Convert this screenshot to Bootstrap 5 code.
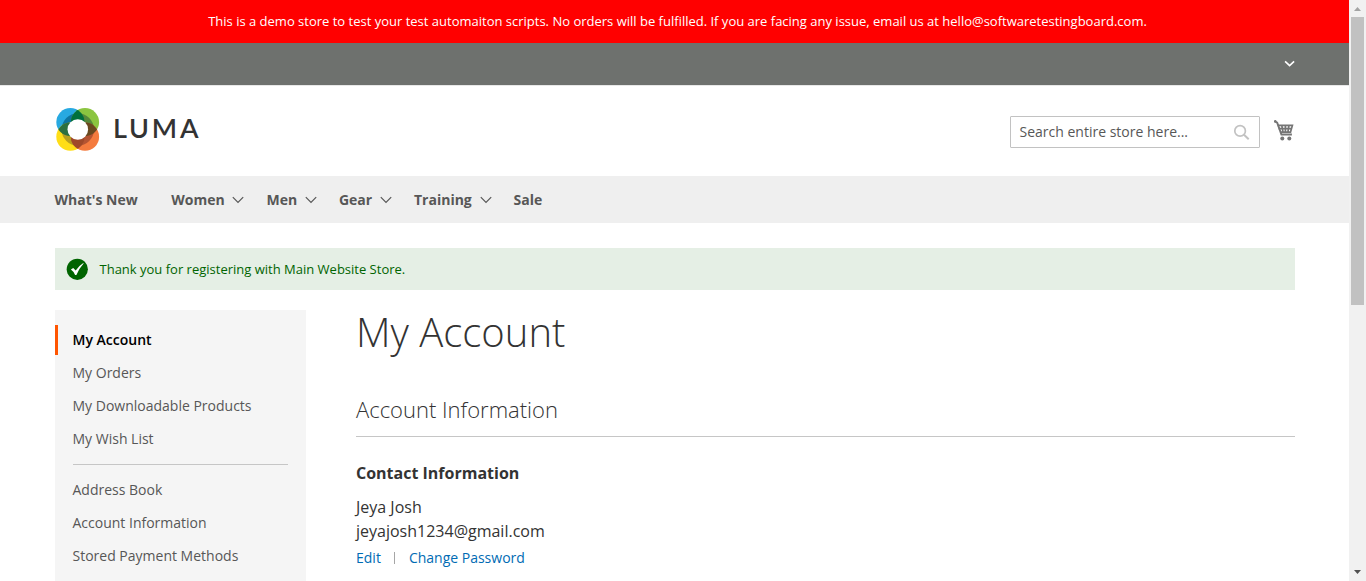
<!DOCTYPE html>
<html lang="en">
<head>
<meta charset="utf-8">
<meta name="viewport" content="width=device-width, initial-scale=1">
<title>My Account</title>
<link href="https://cdn.jsdelivr.net/npm/bootstrap@5.3.0/dist/css/bootstrap.min.css" rel="stylesheet">
<style>
  body { font-family: "Open Sans", sans-serif; font-size: 14px; line-height: 20px; color: #333; background: #fff; height: 100vh; overflow: hidden; }
  a { text-decoration: none; }
  svg { display: block; flex: none; }
  .page { min-width: 0; height: 100vh; overflow: hidden; }
  .wrap { width: 1240px; margin: 0 auto; }
  .demo { background: #f00; color: #fff; height: 43px; font-size: 13px; line-height: 43px; padding-left: 6px; }
  .panel-bar { background: #6e716e; height: 42px; padding-bottom: 1px; }
  .brand-row { height: 91px; border-top: 1px solid #e8e8e8; }
  .logo { margin-bottom: 1px; }
  .search { width: 250px; height: 32px; border: 1px solid #c2c2c2; border-radius: 1px; padding: 0 9px 0 9px; color: #575757; margin: 2px 14px 0 0; }
  .mainnav { background: #efefef; height: 47px; font-weight: 700; line-height: 47px; }
  .mainnav a { color: #575757; }
  .nav-first { margin-right: 33.5px; }
  .nav-drop { margin-right: 22px; }
  .nav-drop svg { margin: 1px 0 0 7.8px; }
  .notice { background: #e5efe5; color: #006400; height: 42px; margin-top: 25px; font-size: 13px; padding-left: 11px; gap: 12px; }
  .columns { margin-top: 20px; }
  .side { width: 251px; height: 300px; background: #f5f5f5; padding: 15px 0; }
  .side a { display: block; color: #575757; height: 30px; line-height: 30px; margin-bottom: 3px; padding-left: 15px; border-left: 3px solid transparent; }
  .side a.current { color: #000; font-weight: 600; border-color: #ff5501; }
  .side hr { margin: 10px 18px; border-color: #c6c6c6; opacity: 1; }
  .content { margin-left: 50.5px; }
  h1 { font-size: 40px; font-weight: 300; line-height: 44px; margin: 0 0 43px; }
  h2 { font-size: 22px; font-weight: 300; line-height: 24px; padding: 0 0 14px; margin: 0 0 24px; border-bottom: 1px solid #c6c6c6; height: 40px; }
  h3 { font-size: 16px; font-weight: 700; line-height: 24px; margin: 0 0 10px; }
  .details { font-size: 16px; line-height: 24px; margin: 0 0 5px; }
  .links a { color: #006bb4; }
  .divider { width: 1px; height: 12px; background: #a6a6a6; margin: 4px 14px 0 13px; }
  .scroller { width: 17px; background: #f1f1f1; height: 100vh; padding: 6px 2px 6px; }
  .thumb { width: 13px; height: 288px; background: #c1c1c1; margin-top: 6px; }
</style>
</head>
<body class="d-flex">
<div class="page flex-grow-1">
  <div class="demo text-center">This is a demo store to test your test automaiton scripts. No orders will be fulfilled. If you are facing any issue, email us at hello@softwaretestingboard.com.</div>
  <div class="panel-bar"><div class="wrap d-flex justify-content-end align-items-center h-100">
    <svg width="12" height="8" viewBox="0 0 12 8"><path d="M2.1 1.4 6.6 5.7 11.1 1.4" fill="none" stroke="#fff" stroke-width="1.6"/></svg>
  </div></div>
  <header class="brand-row"><div class="wrap d-flex align-items-center h-100">
    <svg class="logo" width="148" height="48" viewBox="0 0 148 48" role="img" aria-label="Luma">
      <defs>
        <clipPath id="core"><circle cx="22.8" cy="22.5" r="16.2"/></clipPath>
        <clipPath id="tl"><circle cx="15.4" cy="15.1" r="14.1"/></clipPath>
        <clipPath id="tr"><circle cx="30" cy="15.1" r="14.1"/></clipPath>
        <clipPath id="bl"><circle cx="15.4" cy="29.7" r="14.1"/></clipPath>
      </defs>
      <circle cx="15.4" cy="15.1" r="14.1" fill="#27a9e1"/>
      <circle cx="30" cy="15.1" r="14.1" fill="#8bc540"/>
      <circle cx="15.4" cy="29.7" r="14.1" fill="#ffde17"/>
      <circle cx="30" cy="29.7" r="14.1" fill="#f47b3e"/>
      <g clip-path="url(#core)">
        <circle cx="15.4" cy="15.1" r="14.1" fill="#0d75a0"/>
        <circle cx="30" cy="15.1" r="14.1" fill="#56883a"/>
        <circle cx="15.4" cy="29.7" r="14.1" fill="#b6a022"/>
        <circle cx="30" cy="29.7" r="14.1" fill="#b45432"/>
      </g>
      <circle cx="30" cy="15.1" r="14.1" fill="#00703c" clip-path="url(#tl)"/>
      <circle cx="15.4" cy="29.7" r="14.1" fill="#2c7040" clip-path="url(#tl)"/>
      <circle cx="30" cy="29.7" r="14.1" fill="#69491f" clip-path="url(#tr)"/>
      <circle cx="30" cy="29.7" r="14.1" fill="#a04929" clip-path="url(#bl)"/>
      <circle cx="22.8" cy="22.5" r="10.3" fill="#fff"/>
      <text x="58" y="31.4" font-family="Lato, sans-serif" font-size="27" font-weight="600" fill="#333" textLength="85.5">LUMA</text>
    </svg>
    <div class="search d-flex align-items-center justify-content-between ms-auto">
      <span>Search entire store here...</span>
      <svg width="17" height="17" viewBox="0 0 17 17" fill="none" stroke="#c2c2c2"><circle cx="7.1" cy="6.9" r="5.3" stroke-width="1.7"/><path d="m11 10.8 4.7 4.4" stroke-width="2"/></svg>
    </div>
    <svg width="21" height="22" viewBox="0.6 0.6 21 22"><g fill="none" stroke="#757575"><path d="M1.5 1.9 3.8 3.2 8 15.1H18.5" stroke-width="1.9"/><path d="M4.2 6H19L17.1 12.7H7.2M5.2 9.2H18M8.4 6.2 9.6 12.6M12 6V12.6M15.5 6.2 14.5 12.6" stroke-width="1.7"/></g><g fill="#757575"><circle cx="1.8" cy="1.9" r="1.3"/><circle cx="8.9" cy="19.2" r="2"/><circle cx="15.9" cy="19.2" r="2"/></g></svg>
  </div></header>
  <nav class="mainnav"><div class="wrap d-flex">
    <a class="nav-first" href="#">What's New</a>
    <a class="nav-drop d-flex align-items-center" href="#">Women<svg width="12" height="8" viewBox="0 0 12 8"><path d="M.8 1.2 6 6.5 11.2 1.2" fill="none" stroke="#575757" stroke-width="1.2"/></svg></a>
    <a class="nav-drop d-flex align-items-center" href="#">Men<svg width="12" height="8" viewBox="0 0 12 8"><path d="M.8 1.2 6 6.5 11.2 1.2" fill="none" stroke="#575757" stroke-width="1.2"/></svg></a>
    <a class="nav-drop d-flex align-items-center" href="#">Gear<svg width="12" height="8" viewBox="0 0 12 8"><path d="M.8 1.2 6 6.5 11.2 1.2" fill="none" stroke="#575757" stroke-width="1.2"/></svg></a>
    <a class="nav-drop d-flex align-items-center" href="#">Training<svg width="12" height="8" viewBox="0 0 12 8"><path d="M.8 1.2 6 6.5 11.2 1.2" fill="none" stroke="#575757" stroke-width="1.2"/></svg></a>
    <a href="#">Sale</a>
  </div></nav>
  <div class="wrap">
    <div class="notice d-flex align-items-center">
      <svg width="22" height="22" viewBox="0 0 22 22"><circle cx="11.3" cy="11.3" r="10.6" fill="#006400"/><path d="M4.9 11.6 7.2 10.1 9.7 12.6Q12.7 7.8 17.3 5L17.6 5.5Q13.2 10.3 10.4 16.9H9.1Q7.6 13.5 4.9 11.6Z" fill="#fff"/></svg>
      <span>Thank you for registering with Main Website Store.</span>
    </div>
    <div class="columns d-flex">
      <aside class="side flex-shrink-0">
        <a class="current" href="#">My Account</a>
        <a href="#">My Orders</a>
        <a href="#">My Downloadable Products</a>
        <a href="#">My Wish List</a>
        <hr>
        <a href="#">Address Book</a>
        <a href="#">Account Information</a>
        <a href="#">Stored Payment Methods</a>
      </aside>
      <main class="content flex-grow-1">
        <h1>My Account</h1>
        <h2>Account Information</h2>
        <h3>Contact Information</h3>
        <p class="details">Jeya Josh<br>jeyajosh1234@gmail.com</p>
        <div class="links d-flex"><a href="#">Edit</a><span class="divider"></span><a href="#">Change Password</a></div>
      </main>
    </div>
  </div>
</div>
<div class="scroller flex-shrink-0 d-flex flex-column align-items-center">
  <svg width="9" height="5" viewBox="0 0 9 5"><path d="M1 5 4.5 1 8 5Z" fill="#a3a3a3"/></svg>
  <div class="thumb"></div>
  <svg class="mt-auto" width="9" height="5" viewBox="0 0 9 5"><path d="M1 0 4.5 4 8 0Z" fill="#505050"/></svg>
</div>
<script src="https://cdn.jsdelivr.net/npm/bootstrap@5.3.0/dist/js/bootstrap.bundle.min.js"></script>
</body>
</html>
